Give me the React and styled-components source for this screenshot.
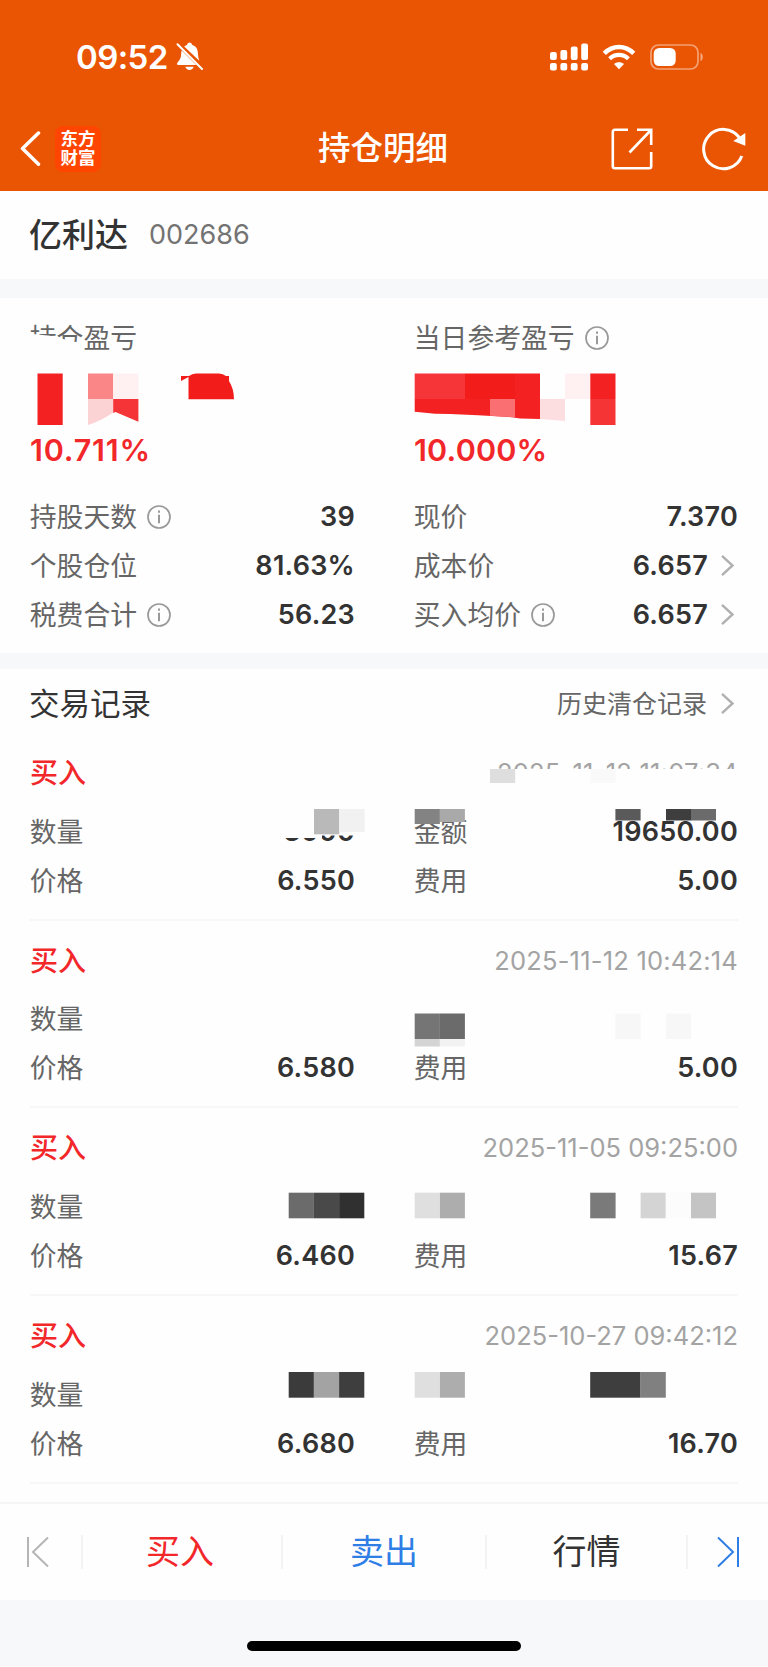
import React from "react";
import styled, { createGlobalStyle } from "styled-components";

const GlobalStyle = createGlobalStyle`
  * {
    box-sizing: border-box;
  }
  body {
    margin: 0;
    background: #fefefe;
    font-family: Inter, "Noto Sans CJK SC", sans-serif;
    color: #333;
  }
  svg {
    display: block;
    flex-shrink: 0;
  }
`;

const Page = styled.div`
  position: relative;
  width: 768px;
  height: 1667px;
  overflow: hidden;
  background: #fefefe;
`;

const Header = styled.header`
  height: 191px;
  background: #ea5504;
  color: #fff;
`;

const StatusBar = styled.div`
  display: flex;
  align-items: center;
  height: 106px;
  padding: 8px 64px 0 76px;
`;

const Time = styled.span`
  margin-right: 8px;
  font-size: 33px;
  font-weight: 600;
  line-height: 40px;
  letter-spacing: -0.6px;
`;

const StatusIcons = styled.div`
  display: flex;
  align-items: center;
  gap: 14px;
  margin-left: auto;
`;

const NavBar = styled.div`
  display: grid;
  grid-template-columns: 1fr auto 1fr;
  align-items: center;
  height: 85px;
  padding: 0 22px 0 20px;
`;

const NavSide = styled.div`
  display: flex;
  align-items: center;
  justify-content: ${({ $end }) => ($end ? "flex-end" : "flex-start")};
  gap: ${({ $end }) => ($end ? "49px" : "13px")};
`;

const Logo = styled.div`
  display: flex;
  align-items: center;
  justify-content: center;
  width: 46px;
  height: 46px;
  padding-bottom: 1px;
  border-radius: 8px;
  background: #ff4500;
  font-size: 17.5px;
  font-weight: 700;
  line-height: 19px;
  text-align: center;
`;

const NavTitle = styled.h1`
  margin: 0;
  padding-top: 1px;
  font-size: 32.5px;
  font-weight: 500;
  line-height: 46px;
`;

const StockBar = styled.section`
  display: flex;
  align-items: center;
  gap: 21px;
  height: 88px;
  padding: 0 29px;
`;

const StockName = styled.h2`
  margin: 0;
  font-size: 33px;
  font-weight: 500;
  line-height: 40px;
`;

const StockCode = styled.span`
  font-size: 27px;
  line-height: 40px;
  color: #737373;
`;

const Gap = styled.div`
  height: ${({ $size }) => $size}px;
  background: #f6f8fa;
`;

const Summary = styled.section`
  height: 355px;
  padding: 20px 30px 0;
`;

const Columns = styled.div`
  display: grid;
  grid-template-columns: 325px 324px;
  column-gap: 59px;
`;

const Label = styled.span`
  display: flex;
  align-items: center;
  gap: 10px;
  margin-left: -0.2px;
  font-size: 26.8px;
  line-height: 40px;
  color: #666;
`;

const Percent = styled.div`
  margin-top: 72px;
  margin-bottom: 22px;
  font-size: 30.5px;
  font-weight: 600;
  line-height: 40px;
  letter-spacing: ${({ $track }) => $track}px;
  color: #f2272a;
`;

const Row = styled.div`
  display: flex;
  align-items: center;
  justify-content: space-between;
  height: 49px;
`;

const Value = styled.span`
  display: flex;
  align-items: center;
  gap: 13px;
  font-size: 27px;
  font-weight: 600;
  line-height: 40px;
  letter-spacing: 0.25px;
`;

const SectionHead = styled.div`
  display: flex;
  align-items: center;
  justify-content: space-between;
  height: 64px;
  padding: 5px 30px 0 29px;
`;

const SectionTitle = styled.h3`
  margin: 0;
  font-size: 30.5px;
  font-weight: 400;
  line-height: 40px;
`;

const HistoryLink = styled.span`
  display: flex;
  align-items: center;
  gap: 14px;
  font-size: 25px;
  line-height: 40px;
  color: #666;
`;

const Records = styled.section`
  height: 833px;
`;

const Record = styled.article`
  height: 187.7px;
  margin: 0 30px;
  padding-top: 20px;
  border-bottom: 2px solid #f7f7f7;
`;

const RecordHead = styled.div`
  display: flex;
  align-items: center;
  justify-content: space-between;
  height: 40px;
  margin-bottom: 14px;
`;

const Side = styled.span`
  font-size: 28px;
  font-weight: 500;
  line-height: 40px;
  color: #f2272a;
`;

const Stamp = styled.time`
  font-size: 25.5px;
  line-height: 40px;
  letter-spacing: ${({ $track }) => $track || 0}px;
  color: #a3a3a3;
`;

const TabBar = styled.nav`
  display: grid;
  grid-template-columns: 81px 200px 204px 201px 82px;
  align-items: center;
  height: 98px;
  border-top: 2px solid #f5f5f5;
`;

const Tab = styled.div`
  display: flex;
  align-items: center;
  justify-content: center;
  height: 34px;
  padding-right: ${({ $shift }) => $shift || 0}px;
  border-left: ${({ $first }) => ($first ? "0" : "2px solid #f3f3f3")};
  font-size: 34px;
  line-height: 34px;
  color: ${({ $color }) => $color};
`;

const Footer = styled.footer`
  display: flex;
  justify-content: center;
  height: 66px;
  padding-top: 41px;
  background: #f6f8fa;
`;

const HomeIndicator = styled.div`
  width: 274px;
  height: 10px;
  border-radius: 5px;
  background: #000;
`;

// covers private figures, lies over the rows
const MaskLayer = styled.svg`
  position: absolute;
  top: 0;
  left: 0;
  pointer-events: none;
`;

const BellOff = () => (
  <svg width="27" height="30" viewBox="0 0 27 30" fill="#fff">
    <path d="M8.2 4.6C9.4 3.6 10.2 3.2 11 3c.3-1.500 1.300-2.400 2.600-2.400S15.900 1.500 16.200 3c4 1.100 5.600 4.400 5.700 8.500.100 2.600.600 5 1.300 7.200z" />
    <path d="M5.700 8.400 20.300 23H2.400C.8 23 .6 21.500 1.600 20.400 4.300 17.500 5.200 15 5.200 11.500c0-1.200.1-2.200.5-3.100z" />
    <path d="M9.300 24.800h8.400c-.6 2-2.200 3.200-4.200 3.200s-3.600-1.200-4.200-3.200z" />
    <path d="M1.500 2.200 26 27" stroke="#fff" strokeWidth="2" strokeLinecap="round" />
  </svg>
);

const Signal = () => (
  <svg width="38" height="28" viewBox="0 0 38 28" fill="#fff">
    {[9, 7, 3.5, 0.5].map((y, i) => (
      <React.Fragment key={i}>
        <rect x={i * 10.4} y={y} width="6.8" height={17 - y} rx="2" />
        <rect x={i * 10.4} y="20" width="6.8" height="7.5" rx="2" />
      </React.Fragment>
    ))}
  </svg>
);

const Wifi = () => (
  <svg width="34" height="26" viewBox="0 0 34 26" fill="none" stroke="#fff">
    <path d="M2.300 9.300C10.800.9 23.200.9 31.700 9.300" strokeWidth="4.600" />
    <path d="M7.600 14.800c5.500-5.200 13.300-5.200 18.800 0" strokeWidth="4.200" />
    <path d="M17 25.200 12 20c2.800-2.500 7.200-2.500 10 0z" fill="#fff" stroke="none" />
  </svg>
);

const Battery = () => (
  <svg width="54" height="26" viewBox="0 0 54 26">
    <rect x="1" y="1" width="47" height="24" rx="7.500" fill="none" stroke="#fff" strokeOpacity="0.45" strokeWidth="1.700" />
    <rect x="3.700" y="4" width="22" height="18" rx="5.500" fill="#fff" />
    <path d="M50.500 9c3 1 3 7 0 8z" fill="#fff" fillOpacity="0.5" />
  </svg>
);

const Back = () => (
  <svg width="22" height="36" viewBox="0 0 22 36" fill="none" stroke="#fff" strokeWidth="3.500">
    <path d="M18.500 2 2.500 17.500l16 15.700" strokeLinecap="round" strokeLinejoin="round" />
  </svg>
);

const Share = () => (
  <svg width="42" height="42" viewBox="0 0 42 42" fill="none" stroke="#fff" strokeWidth="2.600">
    <path d="M17 1.800H3.800a2 2 0 0 0-2 2v34.400a2 2 0 0 0 2 2h34.400a2 2 0 0 0 2-2V24" />
    <path d="M26 1.800h14.200V17M40 2 18.500 24.500" />
  </svg>
);

const Refresh = () => (
  <svg width="44" height="44" viewBox="0 0 44 44" fill="none">
    <path d="M39.800 29A19.700 19.700 0 1 1 37.300 10.500" stroke="#fff" strokeWidth="3" />
    <path d="M43.300 6v12.700L31.300 14z" fill="#fff" />
  </svg>
);

const Info = () => (
  <svg width="24" height="24" viewBox="0 0 24 24" fill="none" stroke="#999">
    <circle cx="12" cy="12" r="11" strokeWidth="1.700" />
    <path d="M12 9.800v8.500M12 5.500v2.300" strokeWidth="2" />
  </svg>
);

const Chevron = () => (
  <svg width="17" height="24" viewBox="0 0 17 24" fill="none" stroke="#b0b0b0" strokeWidth="2.400">
    <path d="M1 1.800 11.500 11.500 1 21.200" />
  </svg>
);

const Skip = ({ flip, color }) => (
  <svg width="24" height="32" viewBox="0 0 24 32" fill="none" stroke={color} strokeWidth="2">
    <path d={flip ? "M22 1v30M2 1.500 17 16 2 30.500" : "M2 1v30M22 1.500 7 16l15 14.500"} />
  </svg>
);

const stats = [
  [
    { label: "持股天数", info: true, value: "39" },
    { label: "现价", value: "7.370" },
  ],
  [
    { label: "个股仓位", value: "81.63%" },
    { label: "成本价", value: "6.657", more: true },
  ],
  [
    { label: "税费合计", info: true, value: "56.23" },
    { label: "买入均价", info: true, value: "6.657", more: true },
  ],
];

const records = [
  { time: "2025-11-12 11:07:34", track: 0.22, qty: "3000", amountLabel: "金额", amount: "19650.00", price: "6.550", fee: "5.00" },
  { time: "2025-11-12 10:42:14", track: 0.2, price: "6.580", fee: "5.00" },
  { time: "2025-11-05 09:25:00", price: "6.460", fee: "15.67" },
  { time: "2025-10-27 09:42:12", price: "6.680", fee: "16.70" },
];

// x, y, width, height, fill
const blocks = [
  [37.5, 373.5, 25.2, 51.5, "#f42122"],
  [88, 373.5, 25.2, 25.5, "#fa8688"],
  [113.2, 373.5, 25.2, 25.5, "#fff0f1"],
  [414.7, 373.5, 50.3, 25.5, "#f63538"],
  [465, 373.5, 50, 25.5, "#f21c1b"],
  [515, 373.5, 25, 25.5, "#f42122"],
  [565, 373.5, 25.2, 25.5, "#fff0f1"],
  [590.3, 373.5, 25.2, 25.5, "#f42122"],
  [590.3, 399, 25.2, 26, "#f53436"],
  [480, 769, 262, 16, "#fefefe"],
  [490, 769, 25.2, 14, "#dedede"],
  [590.5, 769, 25.2, 14, "#f9f9f9"],
  [280, 809, 42, 29, "#fefefe"],
  [320, 809, 38, 26.5, "#fefefe"],
  [314, 809, 25.3, 25.3, "#b9b9b9"],
  [339.3, 809, 25.3, 23, "#f1f1f1"],
  [414.7, 809, 25.2, 15, "#838383"],
  [439.9, 809, 25, 13, "#a9a9a9"],
  [615.4, 809, 25.2, 11.5, "#5a5a5a"],
  [666, 809, 25.2, 11.5, "#3e3e3e"],
  [691, 809, 25, 11.5, "#6b6b6b"],
  [414.7, 1013.5, 25.2, 25.5, "#757575"],
  [439.9, 1013.5, 25, 25.5, "#6b6b6b"],
  [414.7, 1039, 25.2, 7.5, "#d4d4d4"],
  [439.9, 1039, 25, 7.5, "#f2f2f2"],
  [615.4, 1013.5, 25.2, 25.5, "#f7f7f7"],
  [666, 1013.5, 25.2, 25.5, "#f7f7f7"],
  [288.7, 1192.7, 25.2, 25.6, "#6b6b6b"],
  [313.9, 1192.7, 25.2, 25.6, "#494949"],
  [339.1, 1192.7, 25.2, 25.6, "#303030"],
  [414.7, 1192.7, 25.2, 25.6, "#dfdfdf"],
  [439.9, 1192.7, 25, 25.6, "#adadad"],
  [590.2, 1192.7, 25.4, 25.6, "#7a7a7a"],
  [640.6, 1192.7, 25.2, 25.6, "#d4d4d4"],
  [665.8, 1192.7, 25.2, 25.6, "#fcfcfc"],
  [691, 1192.7, 25, 25.6, "#c4c4c4"],
  [288.7, 1372, 25.2, 25.7, "#3b3b3b"],
  [313.9, 1372, 25.2, 25.7, "#a3a3a3"],
  [339.1, 1372, 25.2, 25.7, "#3e3e3e"],
  [414.7, 1372, 25.2, 25.7, "#dfdfdf"],
  [439.9, 1372, 25, 25.7, "#adadad"],
  [590.2, 1372, 50.4, 25.7, "#3e3e3e"],
  [640.6, 1372, 25.2, 25.7, "#808080"],
];

const Mask = () => (
  <MaskLayer width="768" height="1667" viewBox="0 0 768 1667">
    <path d="M28 333.500 38 334.500 56 336.500 61 338.500 80 343V354H28z" fill="#fefefe" />
    {blocks.map(([x, y, w, h, fill], i) => (
      <rect key={i} x={x} y={y} width={w} height={h} fill={fill} />
    ))}
    <path d="M88 399h25.200v13.500Q101 421 88 425z" fill="#fbd3d5" />
    <path d="M113.200 399h25.200v22.700L115.500 412l-2.300 1z" fill="#f43436" />
    <path d="M181 376h8q3-2.500 7-2.500h23q4 0 7 2.500h3v5q5 8 5 18.300h-45.500V377l-7.500 4z" fill="#f21c1b" />
    <path d="M414.700 399H540v20l-20-.5-8-1.300-34-2-28-1.200-15-.2-20.300-2z" fill="#f42122" />
    <path d="M490 399h25v18.300l-25-1.500z" fill="#f96f72" />
    <path d="M540 399h25v22l-25-2z" fill="#fcdee0" />
  </MaskLayer>
);

const Stat = ({ label, info, value, more }) => (
  <Row>
    <Label>
      {label}
      {info && <Info />}
    </Label>
    {value && (
      <Value>
        {value}
        {more && <Chevron />}
      </Value>
    )}
  </Row>
);

const App = () => {
  return (
    <>
      <GlobalStyle />
      <Page>
        <Header>
          <StatusBar>
            <Time>09:52</Time>
            <BellOff />
            <StatusIcons>
              <Signal />
              <Wifi />
              <Battery />
            </StatusIcons>
          </StatusBar>
          <NavBar>
            <NavSide>
              <Back />
              <Logo>
                东方
                <br />
                财富
              </Logo>
            </NavSide>
            <NavTitle>持仓明细</NavTitle>
            <NavSide $end>
              <Share />
              <Refresh />
            </NavSide>
          </NavBar>
        </Header>

        <StockBar>
          <StockName>亿利达</StockName>
          <StockCode>002686</StockCode>
        </StockBar>
        <Gap $size={19} />

        <Summary>
          <Columns>
            <div>
              <Label>持仓盈亏</Label>
              <Percent $track={0.8}>10.711%</Percent>
            </div>
            <div>
              <Label>
                当日参考盈亏
                <Info />
              </Label>
              <Percent $track={0.2}>10.000%</Percent>
            </div>
          </Columns>
          {stats.map((pair, index) => (
            <Columns key={index}>
              {pair.map((item) => (
                <Stat key={item.label} {...item} />
              ))}
            </Columns>
          ))}
        </Summary>
        <Gap $size={16} />

        <Records>
          <SectionHead>
            <SectionTitle>交易记录</SectionTitle>
            <HistoryLink>
              历史清仓记录
              <Chevron />
            </HistoryLink>
          </SectionHead>
          {records.map((item) => (
            <Record key={item.time}>
              <RecordHead>
                <Side>买入</Side>
                <Stamp $track={item.track}>{item.time}</Stamp>
              </RecordHead>
              <Columns>
                <Stat label="数量" value={item.qty} />
                <Stat label={item.amountLabel} value={item.amount} />
                <Stat label="价格" value={item.price} />
                <Stat label="费用" value={item.fee} />
              </Columns>
            </Record>
          ))}
        </Records>

        <TabBar>
          <Tab $first $shift={5}>
            <Skip color="#b5b5b5" />
          </Tab>
          <Tab $color="#f2272a" $shift={4}>
            买入
          </Tab>
          <Tab $color="#2f7ee6">卖出</Tab>
          <Tab $color="#333">行情</Tab>
          <Tab>
            <Skip flip color="#2f7ee6" />
          </Tab>
        </TabBar>
        <Footer>
          <HomeIndicator />
        </Footer>
        <Mask />
      </Page>
    </>
  );
};

export default App;
